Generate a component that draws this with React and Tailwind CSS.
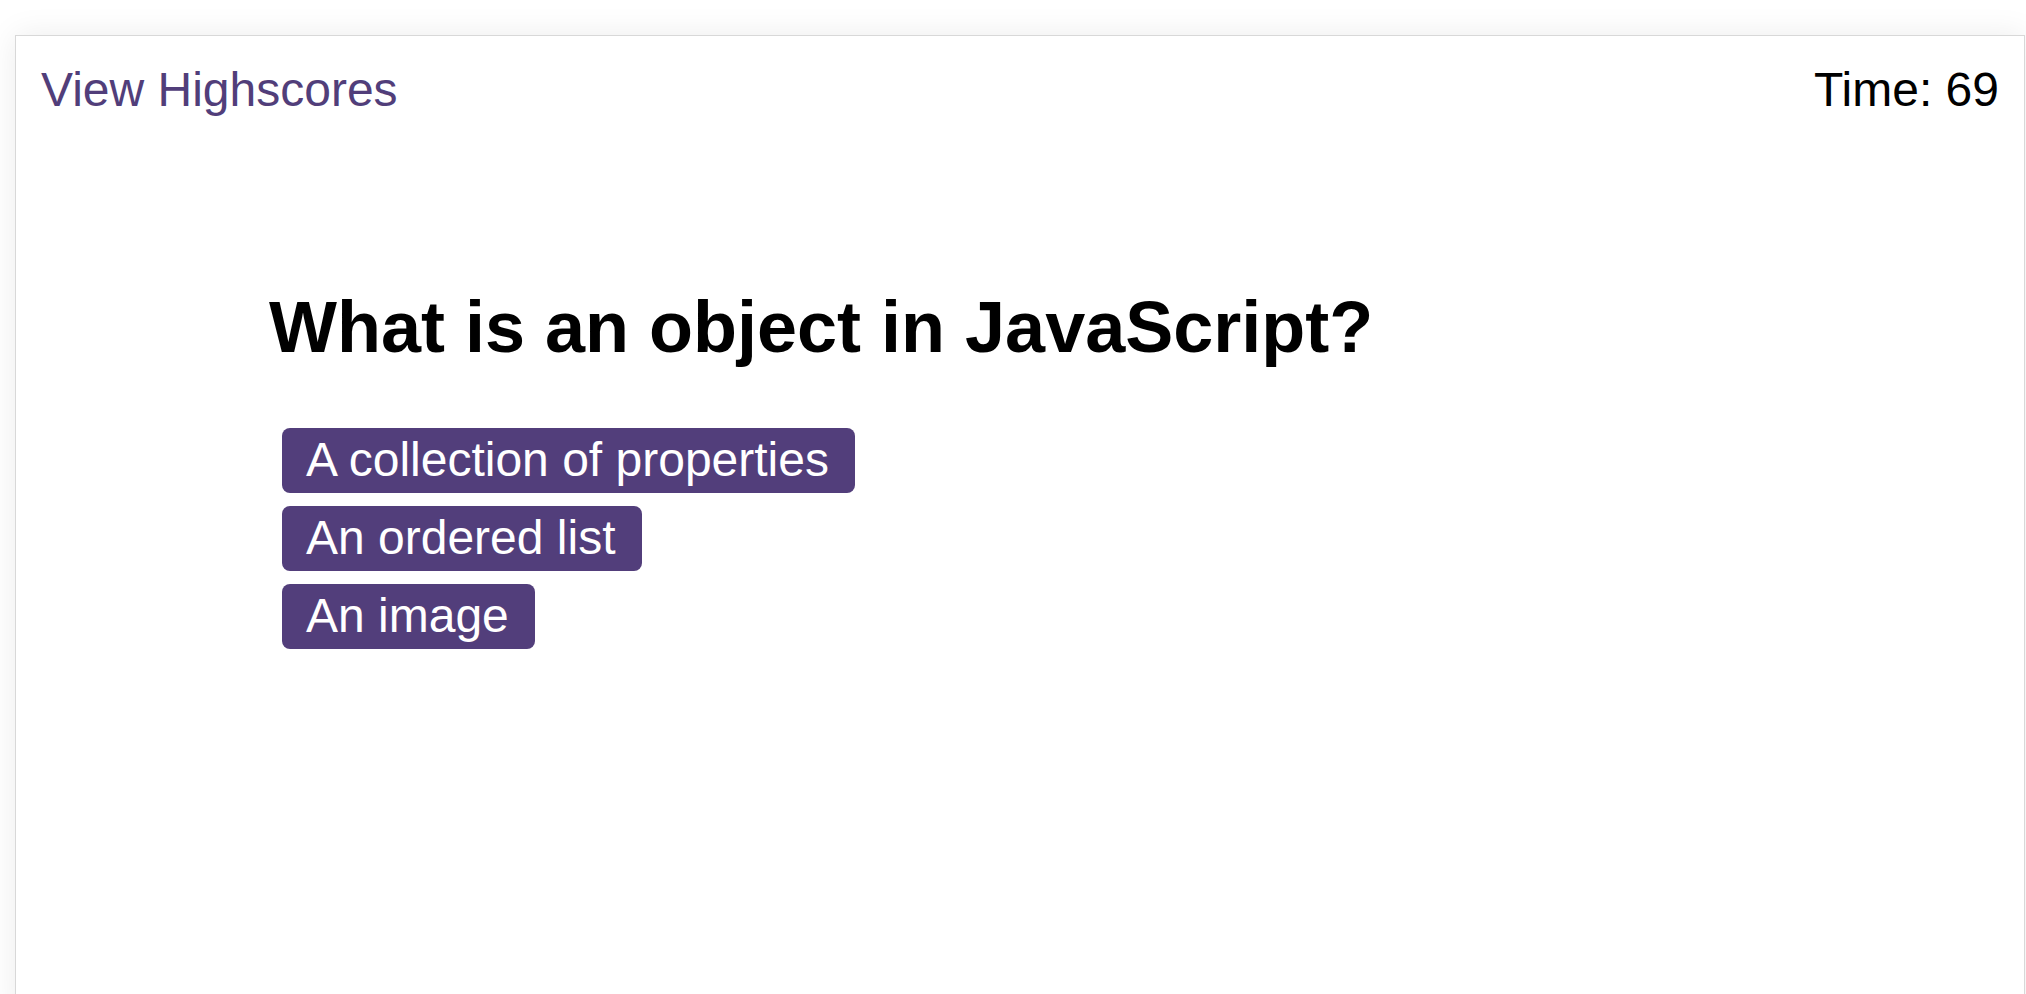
import React from 'react';

const ANSWERS = ['A collection of properties', 'An ordered list', 'An image'];

const App = () => {
  return (
    <div
      className="min-h-screen bg-white pt-[35px] pl-[15px] pr-[1px] overflow-hidden"
      style={{ fontFamily: '"Liberation Sans", Arial, sans-serif' }}
    >
      <div className="h-[980px] border border-[#d8d8d8] bg-white shadow-[0_0_30px_rgba(0,0,0,0.08)]">
        <header className="flex justify-between items-start px-[25px] pt-[26px] text-[48px] leading-[55px]">
          <a href="#" className="text-[#513e7a]">View Highscores</a>
          <span className="text-black">Time: 69</span>
        </header>

        <main className="pl-[253px] mt-[169px]">
          <h1 className="text-[72px] leading-[83px] font-bold text-black">
            What is an object in JavaScript?
          </h1>
          <div className="flex flex-col items-start gap-[13px] mt-[59px] ml-[13px]">
            {ANSWERS.map((answer) => (
              <button
                key={answer}
                className="bg-[#523e7b] text-white text-[48px] leading-[55px] pl-[24px] pr-[26px] pt-[4px] pb-[6px] rounded-[8px]"
              >
                {answer}
              </button>
            ))}
          </div>
        </main>
      </div>
    </div>
  );
};

export default App;
